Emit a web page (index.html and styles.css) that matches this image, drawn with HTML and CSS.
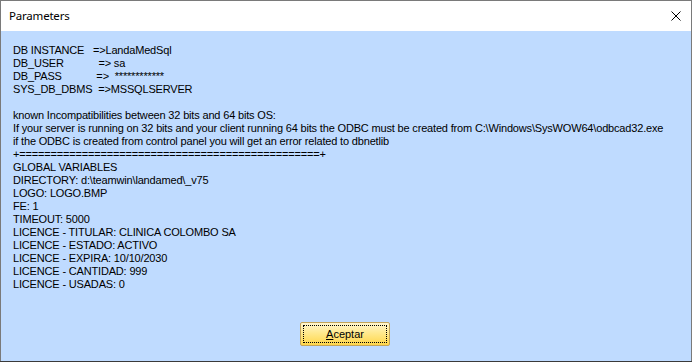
FILE: index.html
```html
<!DOCTYPE html>
<html>
<head>
<meta charset="utf-8">
<link rel="stylesheet" href="styles.css">
</head>
<body>
<div class="window">
  <div class="titlebar">
    <span class="title">Parameters</span>
    <svg class="close" width="10" height="10" viewBox="0 0 10 10"><path d="M0.5 0.5 L9.5 9.5 M9.5 0.5 L0.5 9.5" stroke="#000" stroke-width="1" fill="none"/></svg>
  </div>
  <div class="client">
    <pre class="info">DB INSTANCE   =&gt;LandaMedSql
DB_USER            =&gt; sa
DB_PASS            =&gt;  ************
SYS_DB_DBMS  =&gt;MSSQLSERVER

known Incompatibilities between 32 bits and 64 bits OS:
If your server is running on 32 bits and your client running 64 bits the ODBC must be created from C:\Windows\SysWOW64\odbcad32.exe
if the ODBC is created from control panel you will get an error related to dbnetlib
+================================================+
GLOBAL VARIABLES
DIRECTORY: d:\teamwin\landamed\_v75
LOGO: LOGO.BMP
FE: 1
TIMEOUT: 5000
LICENCE - TITULAR: CLINICA COLOMBO SA
LICENCE - ESTADO: ACTIVO
LICENCE - EXPIRA: 10/10/2030
LICENCE - CANTIDAD: 999
LICENCE - USADAS: 0</pre>
    <div class="actions">
      <button class="btn"><span class="focus"><u>A</u>ceptar</span></button>
    </div>
  </div>
</div>
</body>
</html>
```
FILE: styles.css
```css
html, body {
  margin: 0;
  padding: 0;
  width: 692px;
  height: 362px;
  overflow: hidden;
  background: #3a3a3a;
}
.window {
  width: 690px;
  height: 360px;
  border: 1px solid #7a7a7a;
  border-bottom: none;
  display: flex;
  flex-direction: column;
  background: #bfdbff;
}
.titlebar {
  height: 30px;
  background: #ffffff;
  display: flex;
  align-items: center;
  justify-content: space-between;
  padding: 0 10px 0 8px;
  flex: none;
}
.title {
  font-family: "Noto Sans", "Open Sans", sans-serif;
  font-size: 11.5px;
  letter-spacing: -0.2px;
  color: #000;
  margin-top: -1px;
}
.close {
  margin-top: -1px;
}
.client {
  flex: 1;
  display: flex;
  flex-direction: column;
  padding: 13px 12px 0 12px;
}
.info {
  margin: 0;
  font-family: "Liberation Sans", Arial, sans-serif;
  font-size: 11px;
  letter-spacing: -0.17px;
  line-height: 13px;
  color: #000;
  white-space: pre;
}
.actions {
  display: flex;
  justify-content: center;
  margin-top: 31px;
  padding-right: 2px;
}
.btn {
  width: 90px;
  height: 24px;
  padding: 2px;
  border: 1px solid #c4a55a;
  border-radius: 2px;
  background: linear-gradient(#fff6cf 0%, #ffe98e 45%, #ffd64a 100%);
  font-family: "Liberation Sans", Arial, sans-serif;
  font-size: 11px;
  color: #000;
  display: flex;
}
.focus {
  flex: 1;
  border: 1px dotted #000;
  display: flex;
  align-items: center;
  justify-content: center;
}
```
